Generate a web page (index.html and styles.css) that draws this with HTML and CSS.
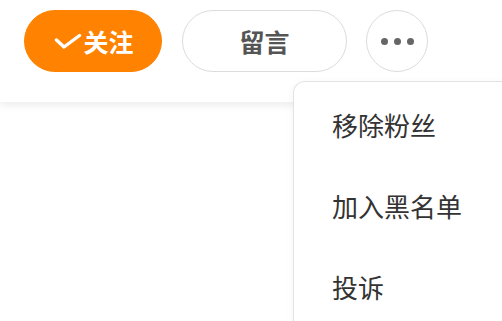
FILE: index.html
```html
<!DOCTYPE html>
<html lang="zh-CN">
<head>
<meta charset="utf-8">
<link rel="stylesheet" href="styles.css">
</head>
<body>
<div class="header">
  <button class="btn btn-follow">
    <svg class="check" width="28" height="16" viewBox="0 0 28 16"><path d="M2.5 7 L10 14 L25.5 2.5" fill="none" stroke="#fff" stroke-width="3.4" stroke-linecap="round" stroke-linejoin="round"/></svg>关注
  </button>
  <button class="btn btn-msg">留言</button>
  <button class="btn btn-more"><span class="dot"></span><span class="dot"></span><span class="dot"></span></button>
</div>
<div class="menu">
  <div class="menu-item">移除粉丝</div>
  <div class="menu-item">加入黑名单</div>
  <div class="menu-item">投诉</div>
</div>
</body>
</html>
```

FILE: styles.css
```css
* { box-sizing: border-box; }
html, body { margin: 0; padding: 0; background: #fff; }
body {
  width: 502px;
  height: 321px;
  overflow: hidden;
  position: relative;
  font-family: "Noto Sans CJK SC", "Noto Sans", sans-serif;
}
.header {
  height: 102px;
  background: #fff;
  display: flex;
  align-items: flex-start;
  padding: 10px 0 0 24px;
  gap: 20px;
  box-shadow: 0 3px 8px rgba(0,0,0,0.08);
}
.btn {
  height: 62px;
  border-radius: 31px;
  border: 1px solid #dcdcdc;
  background: #fff;
  font-family: inherit;
  display: flex;
  align-items: center;
  justify-content: center;
  padding: 0;
  margin: 0;
}
.btn-follow {
  width: 138px;
  background: #ff8200;
  border-color: #ff8200;
  color: #fff;
  font-size: 25px;
  font-weight: 700;
}
.check { margin-right: 1px; margin-left: 2px; }
.btn-msg {
  width: 165px;
  color: #555;
  font-size: 25px;
  font-weight: 700;
}
.btn-more {
  width: 62px;
  margin-left: -1px;
  gap: 6px;
}
.dot {
  width: 7px;
  height: 7px;
  border-radius: 50%;
  background: #666;
}
.menu {
  position: absolute;
  left: 293px;
  top: 81px;
  width: 220px;
  height: 240px;
  background: #fff;
  border: 1px solid #e3e3e3;
  border-bottom: none;
  border-radius: 12px 12px 0 0;
  box-shadow: 0 2px 8px rgba(0,0,0,0.05);
  padding-top: 2px;
}
.menu-item {
  height: 81px;
  display: flex;
  align-items: center;
  padding-left: 38px;
  font-size: 26px;
  color: #333;
}
```
